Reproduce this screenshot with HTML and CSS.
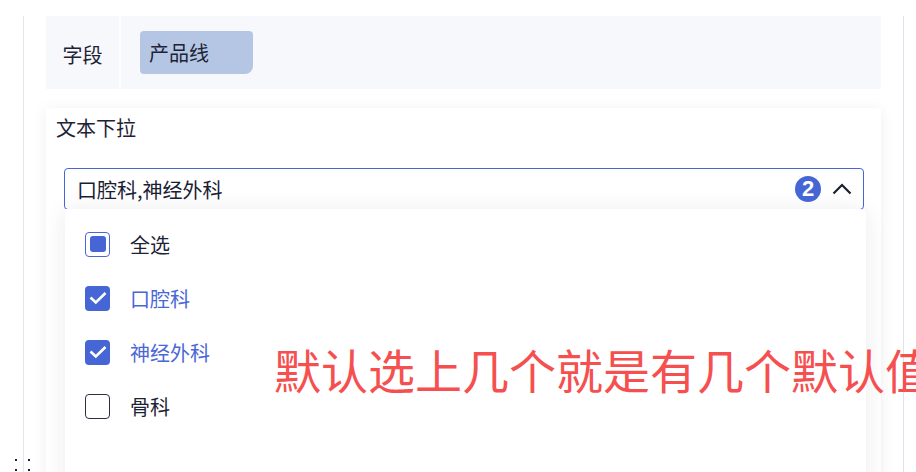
FILE: index.html
```html
<!DOCTYPE html>
<html>
<head>
  <title>文本下拉</title>
  <link rel="stylesheet" href="styles.css">
</head>
<body>
  <div class="page">
    <div class="sidebar">
      <div class="drag-handle">
        <span></span><span></span><span></span><span></span>
      </div>
    </div>

    <div class="main">
      <div class="field-row">
        <div class="field-label">字段</div>
        <div class="field-sep"></div>
        <div class="field-value">
          <span class="tag">产品线</span>
        </div>
      </div>

      <div class="card">
        <div class="card-title">文本下拉</div>

        <div class="select">
          <span class="select-text">口腔科,神经外科</span>
          <span class="badge">2</span>
          <svg class="chevron" width="20" height="12" viewBox="0 0 20 12">
            <path d="M1.5 10.5 L10 2 L18.5 10.5" fill="none" stroke="#1a2033" stroke-width="2.2"/>
          </svg>
        </div>

        <ul class="dropdown">
          <li class="option">
            <span class="checkbox indeterminate"><span class="dot"></span></span>
            <span class="option-label">全选</span>
          </li>
          <li class="option selected">
            <span class="checkbox checked">
              <svg width="18" height="14" viewBox="0 0 18 14"><path d="M1.5 6.5 L6.8 11.5 L16.5 2" fill="none" stroke="#fff" stroke-width="2.6"/></svg>
            </span>
            <span class="option-label">口腔科</span>
          </li>
          <li class="option selected">
            <span class="checkbox checked">
              <svg width="18" height="14" viewBox="0 0 18 14"><path d="M1.5 6.5 L6.8 11.5 L16.5 2" fill="none" stroke="#fff" stroke-width="2.6"/></svg>
            </span>
            <span class="option-label">神经外科</span>
          </li>
          <li class="option">
            <span class="checkbox"></span>
            <span class="option-label">骨科</span>
          </li>
        </ul>
      </div>
    </div>

    <div class="right-rail"></div>
  </div>

  <div class="note">默认选上几个就是有几个默认值</div>
</body>
</html>
```

FILE: styles.css
```css
body {
  margin: 0;
  height: 472px;
  overflow: hidden;
  background: #fff;
  font-family: "Noto Sans CJK SC", "Noto Sans", sans-serif;
  color: #1d2235;
}

.page {
  display: flex;
  height: 100%;
}

/* left rail */
.sidebar {
  width: 23px;
  margin-top: 16px;
  border-right: 1px solid #e6e6e8;
  display: flex;
  flex-direction: column;
  justify-content: flex-end;
}

.drag-handle {
  display: grid;
  grid-template-columns: 2px 2px;
  column-gap: 11px;
  row-gap: 8px;
  margin: 0 0 1px 15px;
}

.drag-handle span {
  width: 2px;
  height: 2px;
  background: #1c2340;
}

/* center column */
.main {
  width: 835px;
  margin-left: 22px;
  padding-top: 16px;
}

.field-row {
  display: flex;
  height: 73px;
  background: #f7f8fc;
}

.field-label {
  width: 73px;
  display: flex;
  align-items: center;
  justify-content: center;
  font-size: 20px;
  padding-top: 4px;
  box-sizing: border-box;
}

.field-sep {
  width: 2px;
  background: #fff;
}

.field-value {
  padding: 15px 0 0 19px;
}

.tag {
  display: flex;
  align-items: center;
  width: 113px;
  height: 43px;
  box-sizing: border-box;
  padding-left: 9px;
  background: #b4c6e4;
  border-radius: 4px 4px 8px 4px;
  font-size: 20px;
}

.card {
  margin-top: 19px;
  height: 400px;
  background: #fff;
  box-shadow: 0 2px 14px rgba(20, 30, 60, 0.07);
  padding: 6px 0 0 10px;
}

.card-title {
  font-size: 20px;
  line-height: 28px;
}

.select {
  display: flex;
  align-items: center;
  width: 800px;
  height: 42px;
  box-sizing: border-box;
  margin: 26px 0 0 8px;
  padding: 0 11px 0 12px;
  border: 1px solid #4865d6;
  border-radius: 4px;
}

.select-text {
  flex: 1;
  font-size: 20px;
  color: #1a2033;
}

.badge {
  width: 26px;
  height: 26px;
  border-radius: 50%;
  background: #4766d6;
  color: #fff;
  font-family: "Liberation Sans", sans-serif;
  font-weight: bold;
  font-size: 22px;
  line-height: 26px;
  text-align: center;
}

.chevron {
  margin-left: 11px;
}

.dropdown {
  list-style: none;
  margin: -1px 0 0 9px;
  padding: 8px 0 0 20px;
  width: 801px;
  height: 300px;
  box-sizing: border-box;
  background: #fff;
  border-radius: 0 6px 0 0;
  box-shadow: 0 2px 22px rgba(20, 30, 60, 0.09);
}

.option {
  display: flex;
  align-items: center;
  height: 54px;
}

.checkbox {
  width: 25px;
  height: 25px;
  box-sizing: border-box;
  border: 1px solid #2a3042;
  border-radius: 4px;
  display: flex;
  align-items: center;
  justify-content: center;
}

.checkbox.indeterminate {
  border-color: #4a67d6;
}

.checkbox .dot {
  width: 16px;
  height: 16px;
  border-radius: 3px;
  background: #4766d6;
}

.checkbox.checked {
  border: none;
  background: #4766d6;
}

.option-label {
  margin-left: 20px;
  font-size: 20px;
}

.option.selected .option-label {
  color: #4a67d6;
}

/* right rail */
.right-rail {
  width: 22px;
  margin-top: 16px;
  border-right: 1px solid #e2e2ee;
}

/* annotation over the dropdown */
.note {
  position: absolute;
  left: 274px;
  top: 337px;
  font-size: 47px;
  line-height: 64px;
  color: #f5504f;
  white-space: nowrap;
}
```
